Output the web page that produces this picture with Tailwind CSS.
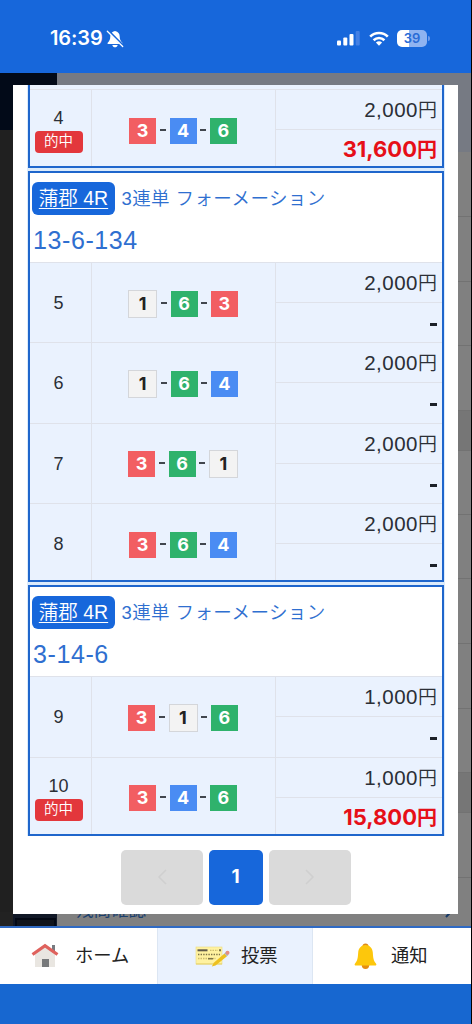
<!DOCTYPE html>
<html lang="ja">
<head>
    <meta charset="UTF-8">
    <meta name="viewport" content="width=device-width, initial-scale=1.0">
    <title>投票履歴</title>
    <script src="https://cdn.jsdelivr.net/npm/@tailwindcss/browser@4"></script>
</head>
<body class="w-[472px] h-[1024px] overflow-hidden bg-black font-['Liberation_Sans','Noto_Sans_CJK_JP',sans-serif] text-[#2b2f36]">
<div class="relative flex flex-col w-[471px] h-full">

    <!-- Status bar -->
    <header class="shrink-0 h-[73px] bg-[#1767db] flex items-start justify-between pl-[50px] pr-[41px] pt-[27px] text-white">
        <div class="flex items-center h-[23px]">
            <span class="font-['Inter'] font-semibold text-[20px] leading-[23px] tracking-[-0.1px]">16:39</span>
            <svg class="ml-[3px] w-[18px] h-[18px]" viewBox="0 0 18 18">
                <path d="M9 1C5.8 1.4 4.3 3.8 4.3 6.6c0 3-.9 4.6-2.6 6.1-.5.5-.3 1.2.5 1.2h13.6c.8 0 1-.7.5-1.2-1.7-1.5-2.6-3.1-2.6-6.1C13.700 3.800 12.200 1.400 9 1z" fill="#fff"/>
                <path d="M6.300 15h5.400c-.4 1.600-1.400 2.300-2.700 2.300s-2.300-.7-2.700-2.300z" fill="#fff"/>
                <path d="M2.300 .8 17 15.700" stroke="#1767db" stroke-width="2.400"/>
                <path d="M1.300 1.300 16.700 16.500" stroke="#fff" stroke-width="1.300" stroke-linecap="round"/>
            </svg>
        </div>
        <div class="flex items-center h-[23px]">
            <svg class="w-[23px] h-[16px] -mt-[2px]" viewBox="0 0 23 16">
                <rect x="0" y="10.500" width="4" height="5" rx="1" fill="#fff"/>
                <rect x="6.300" y="7.500" width="4" height="8" rx="1" fill="#fff"/>
                <rect x="12.500" y="4" width="4" height="11.500" rx="1" fill="#fff"/>
                <rect x="18.700" y="1" width="4" height="14.500" rx="1" fill="#4480e4"/>
            </svg>
            <svg class="ml-[9px] w-[20px] h-[15px] -mt-[1px]" viewBox="0 0 20 15">
                <path d="M1.200 5.600a12.600 12.600 0 0 1 17.600 0" fill="none" stroke="#fff" stroke-width="2.700"/>
                <path d="M4.600 9.200a7.800 7.800 0 0 1 10.800 0" fill="none" stroke="#fff" stroke-width="2.600"/>
                <path d="M10 14.700 6.900 11.600a4.500 4.500 0 0 1 6.200 0z" fill="#fff"/>
            </svg>
            <div class="ml-[8px] w-[30px] h-[17px] rounded-[5px] bg-linear-to-r from-white from-40% to-[#8fb3f1] to-40% flex items-center justify-center font-['Inter'] font-semibold text-[13px] text-[#2a6bd6]">39</div>
            <div class="ml-[1px] w-[2px] h-[5px] rounded-r-full bg-[#6f9bea]"></div>
        </div>
    </header>

    <!-- Dimmed page behind the modal -->
    <main class="relative shrink-0 h-[853px] flex overflow-hidden">
        <div class="w-[57px] flex flex-col">
            <div class="h-[57px] bg-[#020a18]"></div>
            <div class="flex-1 bg-[#202020]"></div>
            <div class="h-[14px] pl-[13px] bg-[#222222]">
                <div class="h-full bg-[#111827] pt-[6px] pl-[2px] pr-px">
                    <div class="h-full bg-[#10141c] border-2 border-b-0 border-[#030814]"></div>
                </div>
            </div>
        </div>
        <div class="flex-1 flex flex-col bg-[#808080]">
            <div class="h-[79px] bg-[#767a83]"></div>
            <div class="h-[65px] border-b border-[#727272]"></div>
            <div class="h-[65px] border-b border-[#727272]"></div>
            <div class="h-[64px] border-b border-[#727272]"></div>
            <div class="h-[65px] border-b border-[#727272]"></div>
            <div class="h-[40px] bg-[#767676] border-b border-[#727272]"></div>
            <div class="h-[64px] border-b border-[#727272]"></div>
            <div class="h-[64px] border-b border-[#727272]"></div>
            <div class="h-[65px] border-b border-[#727272]"></div>
            <div class="h-[65px] border-b border-[#727272]"></div>
            <div class="h-[64px] border-b border-[#727272]"></div>
            <div class="h-[40px] bg-[#767676] border-b border-[#727272]"></div>
            <div class="h-[65px] border-b border-[#727272]"></div>
            <div class="flex-1 flex justify-between pl-[19px] pr-[18px] pt-[19px] text-[#1b406f] text-[17.5px] leading-[26px]">
                <span>残高確認</span>
                <svg class="w-[8px] h-[16px] mt-[6px]" viewBox="0 0 8 16"><path d="M1 1l6 6.500-6 6.500" fill="none" stroke="#173a68" stroke-width="2"/></svg>
            </div>
        </div>
    </main>

    <!-- Bottom navigation -->
    <nav class="shrink-0 h-[58px] border-t-2 border-[#2f6ac4] bg-white flex text-[18.3px] text-[#222]">
        <a class="w-[157px] flex items-center pl-[31px]">
            <svg class="w-[28px] h-[26px]" viewBox="0 0 28 26">
                <path d="M21 2h3v8h-3z" fill="#777b80"/>
                <path d="M4 11 14 3l10 8v13H4z" fill="#e9e6e1"/>
                <path d="M11 16h7v8h-7z" fill="#77797b"/>
                <path d="M1.500 11.500 14 2.700l12.500 8.800" fill="none" stroke="#df625d" stroke-width="3.200"/>
            </svg>
            <span class="ml-[16px]">ホーム</span>
        </a>
        <a class="w-[156px] flex items-center pl-[37px] bg-[#eaf2fe] border-x border-[#dce6f3]">
            <svg class="w-[36px] h-[26px]" viewBox="0 0 36 26">
                <rect x="1" y="4" width="26" height="17" fill="#fff2a0" stroke="#eadb82" stroke-width=".6"/>
                <path d="M1 21h26" stroke="#e4cf62" stroke-width="1"/>
                <path d="M2.500 7.300h10" stroke="#5f5949" stroke-width="2"/>
                <path d="M15 7.300h8M3 15.500h18" stroke="#cdbd6d" stroke-width="1.300" stroke-dasharray="1.500 1"/>
                <path d="M24 7.300h2" stroke="#7e7448" stroke-width="2"/>
                <path d="M3 11.500h22" stroke="#7e7448" stroke-width="1.700" stroke-dasharray="1.400 1.200"/>
                <path d="M13 15.700h5" stroke="#7e7448" stroke-width="1.500"/>
                <path d="m16.800 23.500 2-3.700L29.500 10.500l2.500 2.800L20.500 22.500z" fill="#edc01f"/>
                <path d="m29.300 10.600 1.700-1.500 2.600 2.700-1.700 1.500z" fill="#a9b7be"/>
                <circle cx="32.500" cy="9.800" r="2" fill="#e58d82"/>
            </svg>
            <span class="ml-[10px]">投票</span>
        </a>
        <a class="flex-1 flex items-center pl-[41px]">
            <svg class="w-[23px] h-[27px]" viewBox="0 0 23 27">
                <circle cx="11.500" cy="3.500" r="3" fill="#df8a18"/>
                <circle cx="11.500" cy="22.300" r="3.700" fill="#e58d12"/>
                <path d="M11.500 2C7.300 2 4.500 5.300 4.200 9.500c-.4 5.500-.7 8.300-3 10.700-1.200 1.400-.5 2.300 1 2.300h18.600c1.500 0 2.200-.9 1-2.300-2.300-2.400-2.600-5.200-3-10.700C18.500 5.300 15.700 2 11.500 2z" fill="#fdc70c"/>
            </svg>
            <span class="ml-[14px]">通知</span>
        </a>
    </nav>
    <div class="flex-1 bg-[#1767d0]"></div>

    <!-- Bet history modal -->
    <div class="absolute left-[13px] top-[85px] w-[445px] h-[829px] bg-white overflow-hidden flex flex-col">
        <div id="betList" class="ml-[14px] w-[418px] px-px flex flex-col gap-[3px] bg-[#dcebfb]"></div>
        <div class="mt-[14px] flex justify-center gap-[6px]">
            <button class="w-[82px] h-[55px] rounded-[5px] bg-[#dadada] flex items-center justify-center">
                <svg class="w-[10px] h-[16px]" viewBox="0 0 10 16"><path d="M9 1 2 8l7 7" fill="none" stroke="#cfcfcf" stroke-width="1.500"/></svg>
            </button>
            <button class="w-[54px] h-[55px] rounded-[5px] bg-[#1767db] text-white font-bold text-[19px] font-['Inter']">1</button>
            <button class="w-[82px] h-[55px] rounded-[5px] bg-[#dadada] flex items-center justify-center">
                <svg class="w-[10px] h-[16px]" viewBox="0 0 10 16"><path d="m1 1 7 7-7 7" fill="none" stroke="#cfcfcf" stroke-width="1.500"/></svg>
            </button>
        </div>
    </div>
</div>

<script>
    const groups = [
        { rows: [{ no: 4, nums: [3, 4, 6], bet: '2,000', win: '31,600' }] },
        { race: '蒲郡 4R', type: '3連単 フォーメーション', combo: '13-6-134', rows: [
            { no: 5, nums: [1, 6, 3], bet: '2,000' },
            { no: 6, nums: [1, 6, 4], bet: '2,000' },
            { no: 7, nums: [3, 6, 1], bet: '2,000' },
            { no: 8, nums: [3, 6, 4], bet: '2,000' },
        ] },
        { race: '蒲郡 4R', type: '3連単 フォーメーション', combo: '3-14-6', rows: [
            { no: 9, nums: [3, 1, 6], bet: '1,000' },
            { no: 10, nums: [3, 4, 6], bet: '1,000', win: '15,800' },
        ] },
    ];

    const tileClass = {
        1: 'w-[29px] h-[28px] bg-[#f3f3f3] border border-[#d4d6da] text-[#222]',
        3: 'w-[27px] h-[26px] bg-[#f25e62] text-white',
        4: 'w-[27px] h-[26px] bg-[#4a8cf3] text-white',
        6: 'w-[27px] h-[26px] bg-[#2fb26c] text-white',
    };

    const tile = n => `<span class="${tileClass[n]} flex items-center justify-center font-bold text-[18px] leading-none font-['Inter']">${n}</span>`;
    const dash = '<span class="w-[6px] h-[2px] mx-[3.7px] -mt-[2px] bg-[#41464e]"></span>';

    function renderHead(g) {
        return `
            <div class="h-[89px] bg-white text-[#2f6fd0] pl-[2px] pt-[9px]">
                <div class="flex items-center h-[33px]">
                    <span class="w-[83px] h-[33px] rounded-[6px] bg-[#1767db] text-white text-center font-[350] text-[19.5px] leading-[33px] whitespace-nowrap underline underline-offset-[3px] decoration-1">${g.race}</span>
                    <span class="ml-[6.5px] font-[350] text-[18.5px] leading-[34px] tracking-[0.4px] whitespace-nowrap">${g.type}</span>
                </div>
                <div class="mt-[9px] pl-px text-[25px] leading-[32px] tracking-[0.6px]">${g.combo}</div>
            </div>`;
    }

    function renderRow(r, last) {
        return `
            <div class="${last ? 'h-[77px]' : 'h-[80.4px]'} flex bg-[#eaf2fe] border-t border-[#dfe2ea]">
                <div class="w-[62px] border-r border-[#dfe2ea]">
                    <div class="h-[80px] pr-[4px] flex flex-col ${r.win ? 'pt-[18px]' : 'pt-[30px]'} items-center text-[18px] leading-[20px]">
                        ${r.no}
                        ${r.win ? '<span class="mt-[3px] w-[48px] h-[22px] rounded-[4px] bg-[#e3373c] text-white text-center font-[350] text-[14.5px] leading-[21px]">的中</span>' : ''}
                    </div>
                </div>
                <div class="w-[184px] border-r border-[#dfe2ea]">
                    <div class="h-[81px] pr-px flex items-center justify-center">${r.nums.map(tile).join(dash)}</div>
                </div>
                <div class="flex-1">
                    <div class="h-[40px] border-b border-[#dfe2ea] pr-[5px] text-right text-[20.5px] leading-[40px] tracking-[0.5px]">${r.bet}<span class="font-[350] text-[19px] tracking-normal">円</span></div>
                    ${r.win
                        ? `<div class="h-[36px] pr-[5px] text-right font-['Inter','Noto_Sans_CJK_JP'] font-bold text-[22px] leading-[39px] text-[#e60f18] whitespace-nowrap">${r.win}<span class="text-[20px]">円</span></div>`
                        : '<div class="h-[36px] pr-[5px] pt-[20px] flex justify-end"><span class="w-[7px] h-[3px] bg-[#1c2128]"></span></div>'}
                </div>
            </div>`;
    }

    document.getElementById('betList').innerHTML = groups.map(g => `
        <section class="border-x-2 border-b-2 border-[#1f66cc] ${g.race ? 'border-t-2' : 'pt-[4px] bg-[#eaf2fe]'}">
            ${g.race ? renderHead(g) : ''}
            ${g.rows.map((r, i) => renderRow(r, i === g.rows.length - 1)).join('')}
        </section>`).join('');
</script>
</body>
</html>
